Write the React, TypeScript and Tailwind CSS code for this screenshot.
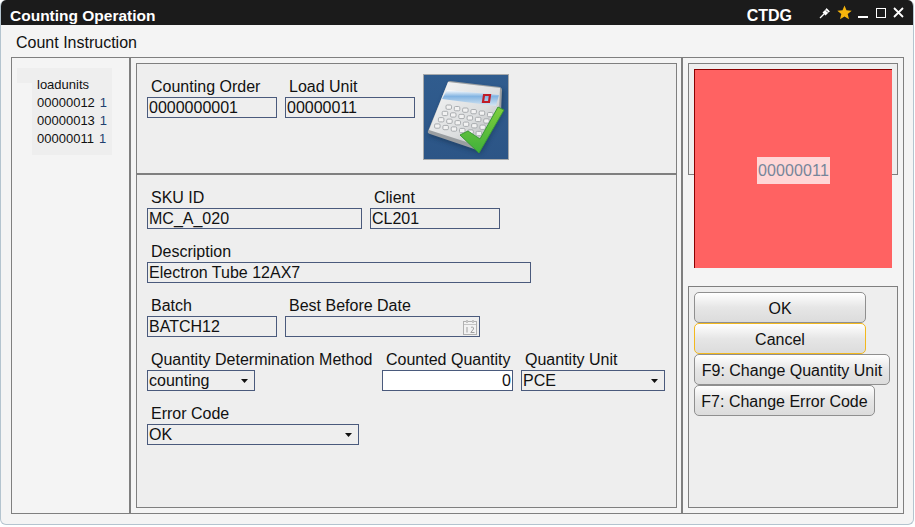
import React from "react";

const Label = ({ children, className = "" }: { children: React.ReactNode; className?: string }) => (
  <div className={`h-[19px] pl-1 text-[16px] leading-[18px] text-[#111] whitespace-nowrap ${className}`}>{children}</div>
);

const Field = ({
  value,
  className = "",
  children,
}: {
  value?: string;
  className?: string;
  children?: React.ReactNode;
}) => (
  <div
    className={`flex h-[21px] items-center border border-[#4a5a7c] bg-[#eeeeee] pl-[1px] pr-[1px] text-[16px] leading-[19px] text-[#111] whitespace-nowrap ${className}`}
  >
    {value}
    {children}
  </div>
);

const Caret = () => (
  <svg width="7" height="4" viewBox="0 0 7 4" className="ml-auto mr-[5px] mt-[1px]">
    <path d="M0 0H7L3.500 4Z" fill="#111" />
  </svg>
);

const Btn = ({ label, w, focus }: { label: string; w: string; focus?: boolean }) => (
  <div
    className={`${w} flex h-[31px] items-center justify-center rounded-[5px] border bg-gradient-to-b from-[#ffffff] via-[#e6e6e6] to-[#dcdcdc] pt-[2px] text-[16px] text-[#111] whitespace-nowrap ${
      focus ? "border-[#f2b81e]" : "border-[#8f8f8f]"
    }`}
  >
    {label}
  </div>
);

const Calc = () => (
  <svg width="86" height="86" viewBox="0 0 86 86" className="block">
    <defs>
      <linearGradient id="body" x1="0" y1="0" x2="1" y2="1">
        <stop offset="0" stopColor="#f6f6f6" />
        <stop offset="0.6" stopColor="#dcdedf" />
        <stop offset="1" stopColor="#a9acae" />
      </linearGradient>
      <linearGradient id="lcd" x1="0" y1="0" x2="0" y2="1">
        <stop offset="0" stopColor="#ffffff" />
        <stop offset="0.4" stopColor="#83b4e2" />
        <stop offset="1" stopColor="#d6e6f2" />
      </linearGradient>
      <linearGradient id="chk" x1="0" y1="0" x2="0" y2="1">
        <stop offset="0" stopColor="#7fce3c" />
        <stop offset="1" stopColor="#3fb03a" />
      </linearGradient>
      <linearGradient id="bg" x1="0" y1="0" x2="0" y2="1">
        <stop offset="0" stopColor="#305c8e" />
        <stop offset="1" stopColor="#2c5586" />
      </linearGradient>
      <filter id="soft" x="-10%" y="-10%" width="120%" height="120%">
        <feGaussianBlur stdDeviation="0.55" />
      </filter>
      <filter id="shade" x="-20%" y="-20%" width="140%" height="140%">
        <feGaussianBlur stdDeviation="2" />
      </filter>
    </defs>
    <rect x="0" y="0" width="86" height="86" fill="#a6a9ab" />
    <rect x="1" y="1" width="84" height="84" fill="url(#bg)" />
    <path d="M26 10 L81 16 L80 40 L58 80 L5 62 Z" fill="#17304f" opacity="0.5" filter="url(#shade)" />
    <g filter="url(#soft)">
      <path d="M25 8 Q25 7 27 7 L77 13 Q79 14 79 16 L78 38 L57 76 Q56 77 54 76 L7 60 Q4 59 5 57 Z" fill="#9a9ea1" />
      <path d="M25 8 L77 14 L76 36 L56 72 L6 56 Z" fill="url(#body)" />
      <path d="M24 16 L76 21 L73 32 L19 25 Z" fill="url(#lcd)" />
      <path d="M61 21 h6 l-1 7 h-6 Z" fill="none" stroke="#c01f28" strokeWidth="2.200" />
      {[0, 1, 2, 3, 4, 5].map((c) =>
        [0, 1, 2, 3].map((r) => (
          <rect
            key={`${c}-${r}`}
            x={23 + c * 8.300 - r * 3.800}
            y={31 + c * 1.500 + r * 6.300}
            width="5.500"
            height="4.300"
            rx="1.200"
            fill="#f2f2f2"
            stroke="#a2a5a8"
            strokeWidth="0.900"
          />
        ))
      )}
      <path d="M37 61 L45 57 L57 65 L75 33 L81 36 L56 79 Z" fill="url(#chk)" stroke="#3a9a36" strokeWidth="1" strokeLinejoin="round" />
    </g>
  </svg>
);

export default function App() {
  return (
    <div className="h-[527px] w-[915px] bg-white font-['Liberation_Sans',Arial,sans-serif]">
      <div className="flex h-[525px] w-[914px] flex-col overflow-hidden rounded-t-[6px] rounded-b-[6px] border-b border-l border-r border-[#b4c4cf] bg-[#f4f4f4]">
        <div className="flex h-[25px] shrink-0 items-center bg-[#1b1b1b] pl-[9px] text-white">
          <span className="pt-[5px] text-[15.500px] font-bold leading-[25px]">Counting Operation</span>
          <span className="ml-auto pt-[5px] text-[16px] font-bold leading-[25px]">CTDG</span>
          <div className="ml-[27px] mr-[9px] flex items-center">
            <svg width="12" height="12" viewBox="0 0 12 12" className="mr-[6px]">
              <path d="M1 11 L5 7" stroke="#fff" strokeWidth="1.200" fill="none" />
              <path d="M3.500 5.500 L7 2 L7.500 1 L11 4.500 L10 5 L6.500 8.500 Z" fill="#fff" />
              <path d="M7 3.500 L9 5.500" stroke="#333" strokeWidth="1" />
            </svg>
            <svg width="15" height="15" viewBox="0 0 15 15" className="mr-[6px]">
              <path d="M7.500 0.500 L9.500 5.300 L14.700 5.700 L10.700 9 L12 14.200 L7.500 11.400 L3 14.200 L4.300 9 L0.300 5.700 L5.500 5.300 Z" fill="#f6b40c" />
            </svg>
            <svg width="10" height="12" viewBox="0 0 10 12" className="mr-[8px]">
              <rect x="0" y="9" width="10" height="2" fill="#fff" />
            </svg>
            <svg width="10" height="10" viewBox="0 0 10 10" className="mr-[7px]">
              <rect x="0.500" y="0.500" width="9" height="9" fill="none" stroke="#fff" strokeWidth="1" />
            </svg>
            <svg width="11" height="11" viewBox="0 0 11 11">
              <path d="M1 1 L10 10 M10 1 L1 10" stroke="#fff" strokeWidth="1.800" />
            </svg>
          </div>
        </div>

        <div className="flex h-[32px] shrink-0 items-center pl-[15px] pt-[3px] text-[16px] text-[#111]">Count Instruction</div>

        <div className="ml-[10px] flex h-[457px] w-[893px] shrink-0 border border-[#7f7f7f]">
          <div className="w-[119px] shrink-0 border-r-2 border-[#7f7f7f] pl-[5px] pt-[10px]">
            <div className="w-[95px] text-[13px] leading-[18px] text-[#111]">
              <div className="h-[15px] bg-[#eeeeee]" />
              <div className="ml-[15px] flex h-[72px] flex-col bg-[#eeeeee] pl-[5px]">
                <div className="-mt-[7px] h-[18px] shrink-0">loadunits</div>
                {["00000012", "00000013", "00000011"].map((id) => (
                  <div key={id} className="flex h-[18px] shrink-0">
                    <span>{id}</span>
                    <span className="ml-[5px] text-[#1f3f6f]">1</span>
                  </div>
                ))}
              </div>
            </div>
          </div>

          <div className="flex w-[552px] shrink-0 border-r-2 border-[#7f7f7f] pl-[5px] pt-[5px]">
            <div className="flex h-[445px] w-[541px] flex-col border border-[#7f7f7f] bg-[#eeeeee]">
              <div className="flex h-[111px] shrink-0 items-start border-b-2 border-[#7f7f7f] pl-[10px] pt-[14px]">
                <div className="w-[130px]">
                  <Label>Counting Order</Label>
                  <Field value="0000000001" />
                </div>
                <div className="ml-[8px] w-[130px]">
                  <Label>Load Unit</Label>
                  <Field value="00000011" />
                </div>
                <div className="-mt-[4px] ml-[8px]">
                  <Calc />
                </div>
              </div>

              <div className="flex flex-col gap-[14px] pl-[10px] pt-[14px]">
                <div className="flex gap-[8px]">
                  <div className="w-[215px]">
                    <Label>SKU ID</Label>
                    <Field value="MC_A_020" />
                  </div>
                  <div className="w-[130px]">
                    <Label>Client</Label>
                    <Field value="CL201" />
                  </div>
                </div>
                <div className="w-[384px]">
                  <Label>Description</Label>
                  <Field value="Electron Tube 12AX7" />
                </div>
                <div className="flex gap-[8px]">
                  <div className="w-[130px]">
                    <Label>Batch</Label>
                    <Field value="BATCH12" />
                  </div>
                  <div className="w-[195px]">
                    <Label>Best Before Date</Label>
                    <Field>
                      <svg width="16" height="16" viewBox="0 0 16 16" className="ml-auto">
                        <rect x="1.500" y="2.500" width="13" height="13" fill="#f2f2f2" stroke="#b0b0b0" />
                        <rect x="4" y="1" width="2" height="3" fill="#c4c4c4" />
                        <rect x="10" y="1" width="2" height="3" fill="#c4c4c4" />
                        <path d="M2 5.500H14" stroke="#c4c4c4" />
                        <path d="M5 8 V13.500 M9 8.500 C10 7.500 12 8 11.500 10 L8.800 13.500 H12.500" stroke="#a0a0a0" strokeWidth="1" fill="none" />
                      </svg>
                    </Field>
                  </div>
                </div>
                <div className="flex">
                  <div className="w-[235px]">
                    <Label>Quantity Determination Method</Label>
                    <Field className="w-[108px]">
                      counting
                      <Caret />
                    </Field>
                  </div>
                  <div className="w-[131px]">
                    <Label>Counted Quantity</Label>
                    <Field className="justify-end !bg-white pr-[1px]">0</Field>
                  </div>
                  <div className="ml-[8px] w-[144px]">
                    <Label>Quantity Unit</Label>
                    <Field>
                      PCE
                      <Caret />
                    </Field>
                  </div>
                </div>
                <div className="w-[212px]">
                  <Label>Error Code</Label>
                  <Field>
                    OK
                    <Caret />
                  </Field>
                </div>
              </div>
            </div>
          </div>

          <div className="flex flex-col pl-[5px] pt-[5px]">
            <div className="h-[112px] w-[210px] shrink-0 border border-[#7f7f7f] bg-[#eeeeee] pl-[5px] pt-[5px]">
              <div className="relative z-10 flex h-[199px] w-[198px] items-center justify-center border-l border-t border-[#8b0000] bg-[#ff6262]">
                <span className="mt-[2px] h-[27px] bg-[#ffd6d6] px-[1.500px] text-[16px] leading-[27px] tracking-[0.1px] text-[#76859a]">00000011</span>
              </div>
            </div>
            <div className="mt-[111px] flex h-[222px] w-[210px] shrink-0 flex-col items-start border border-[#7f7f7f] bg-[#eeeeee] pl-[5px] pt-[5px]">
              <Btn label="OK" w="w-[172px]" />
              <Btn label="Cancel" w="w-[172px]" focus />
              <Btn label="F9: Change Quantity Unit" w="w-[196px]" />
              <Btn label="F7: Change Error Code" w="w-[181px]" />
            </div>
          </div>
        </div>
      </div>
    </div>
  );
}
